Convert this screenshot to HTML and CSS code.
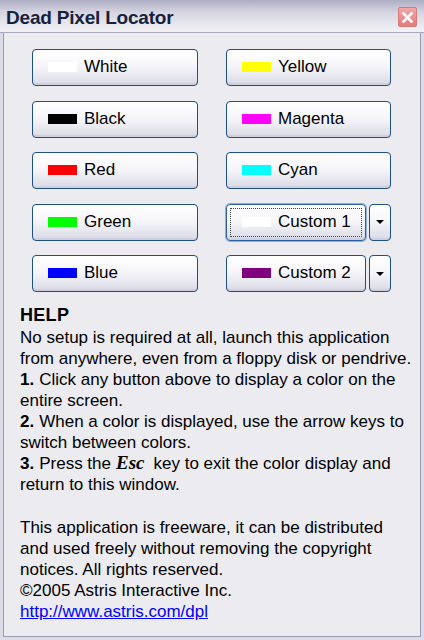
FILE: index.html
```html
<!DOCTYPE html>
<html>
<head>
<meta charset="utf-8">
<link rel="stylesheet" href="styles.css">
</head>
<body>
<div class="window">
  <div class="titlebar">
    <span class="title">Dead Pixel Locator</span>
    <span class="close"><svg width="11" height="11" viewBox="0 0 11 11"><path d="M1.5 1.5 L9.5 9.5 M9.5 1.5 L1.5 9.5" stroke="#fff" stroke-width="2.6" stroke-linecap="square"/></svg></span>
  </div>
  <div class="client">
    <div class="grid">
      <button class="btn"><span class="sw sw-white"></span>White</button>
      <button class="btn"><span class="sw sw-yellow"></span>Yellow</button>
      <button class="btn"><span class="sw sw-black"></span>Black</button>
      <button class="btn"><span class="sw sw-magenta"></span>Magenta</button>
      <button class="btn"><span class="sw sw-red"></span>Red</button>
      <button class="btn"><span class="sw sw-cyan"></span>Cyan</button>
      <button class="btn"><span class="sw sw-green"></span>Green</button>
      <div class="combo">
        <button class="btn focused"><span class="sw sw-white"></span>Custom 1</button>
        <button class="btn drop"><span class="tri"></span></button>
      </div>
      <button class="btn"><span class="sw sw-blue"></span>Blue</button>
      <div class="combo">
        <button class="btn"><span class="sw sw-purple"></span>Custom 2</button>
        <button class="btn drop"><span class="tri"></span></button>
      </div>
    </div>
    <div class="help">
      <div class="help-title">HELP</div>
      <p>No setup is required at all, launch this application from anywhere, even from a floppy disk or pendrive.</p>
      <p class="line"><b class="num">1.</b><span>Click any button above to display a color on the</span></p>
      <p class="line">entire screen.</p>
      <p class="line"><b class="num">2.</b><span>When a color is displayed, use the arrow keys to</span></p>
      <p class="line">switch between colors.</p>
      <p class="line"><b class="num">3.</b><span>Press the</span><span class="esc">Esc</span><span>key to exit the color display and</span></p>
      <p class="line">return to this window.</p>
      <div class="about">
        <p>This application is freeware, it can be distributed and used freely without removing the copyright notices. All rights reserved.</p>
        <p>©2005 Astris Interactive Inc.</p>
        <p><a href="#" class="link">http://www.astris.com/dpl</a></p>
      </div>
    </div>
  </div>
</div>
</body>
</html>
```

FILE: styles.css
```css
html, body {
  margin: 0;
  padding: 0;
  background: #ebebf0;
}
.window {
  width: 424px;
  height: 640px;
  box-sizing: border-box;
  background: #ebebf0;
  border-left: 3px solid #dcdce6;
  border-right: 3px solid #dcdce6;
  border-bottom: 3px solid #dcdce6;
  display: flex;
  flex-direction: column;
  font-family: "Liberation Sans", Arial, sans-serif;
  color: #000;
}
.titlebar {
  height: 33px;
  flex: none;
  box-sizing: border-box;
  display: flex;
  align-items: center;
  justify-content: space-between;
  padding: 0 7px 0 3px;
  margin: 0 -3px;
  background: linear-gradient(#adadc4 0%, #d7d7e3 40%, #f2f2f6 100%);
  border-bottom: 1px solid #a9a9bd;
}
.title {
  font-weight: bold;
  font-size: 19px;
  color: #16213d;
  letter-spacing: -0.2px;
  padding-left: 3px;
  margin-top: 3px;
}
.close {
  width: 19px;
  height: 20px;
  margin-top: 2px;
  box-sizing: border-box;
  border: 1px solid #d67a7a;
  border-radius: 2px;
  background: linear-gradient(#f2a6a6, #e47c7c);
  display: flex;
  align-items: center;
  justify-content: center;
}
.client {
  flex: 1;
  border-left: 1px solid #9c9cb4;
  border-right: 1px solid #9c9cb4;
  border-bottom: 1px solid #9c9cb4;
  padding: 16px 0 0 0;
}
.grid {
  display: grid;
  grid-template-columns: 166px 165px;
  column-gap: 28px;
  row-gap: 14.5px;
  padding-left: 28px;
}
.btn {
  height: 37px;
  box-sizing: border-box;
  border: 1px solid #1e4f85;
  border-radius: 4px;
  background: linear-gradient(#ffffff 0%, #f6f6fa 45%, #dadae6 100%);
  box-shadow: inset 0 -2px 0 #cfcfdd;
  font-family: "Liberation Sans", Arial, sans-serif;
  font-size: 17px;
  color: #000;
  display: flex;
  align-items: center;
  padding: 0 0 1px 15px;
  margin: 0;
  text-align: left;
  position: relative;
}
.sw {
  width: 29px;
  height: 10px;
  margin-right: 7px;
  flex: none;
}
.sw-white { background: #ffffff; }
.sw-yellow { background: #ffff00; }
.sw-black { background: #000000; }
.sw-magenta { background: #ff00ff; }
.sw-red { background: #ff0000; }
.sw-cyan { background: #00ffff; }
.sw-green { background: #00ff00; }
.sw-blue { background: #0000ff; }
.sw-purple { background: #800080; }
.combo {
  display: flex;
  gap: 3px;
}
.combo .btn:first-child {
  width: 140px;
}
.btn.drop {
  width: 22px;
  padding: 0;
  justify-content: center;
}
.tri {
  width: 0;
  height: 0;
  border-left: 4px solid transparent;
  border-right: 4px solid transparent;
  border-top: 4px solid #000;
}
.focused {
  border-color: #2a5fa0;
  box-shadow: inset 0 -2px 0 #cfcfdd, 0 0 0 1px #8fb0dc;
}
.focused::after {
  content: "";
  position: absolute;
  inset: 3px;
  border: 1px dotted #444;
}
.help {
  padding: 12px 2px 0 16px;
  font-size: 17px;
  line-height: 21px;
}
.help-title {
  font-weight: bold;
  font-size: 18px;
  line-height: 23px;
  letter-spacing: 0.3px;
}
.help p {
  margin: 0;
}
.help p.line {
  white-space: nowrap;
}
.num {
  margin-right: 5px;
}
.about {
  margin-top: 22px;
  max-width: 382px;
}
.esc {
  font-family: "Liberation Serif", "Times New Roman", serif;
  font-weight: bold;
  font-style: italic;
  font-size: 19px;
  line-height: 17px;
  margin: 0 9px 0 5px;
}
.link {
  color: #0000ff;
  text-decoration: underline;
}
```
